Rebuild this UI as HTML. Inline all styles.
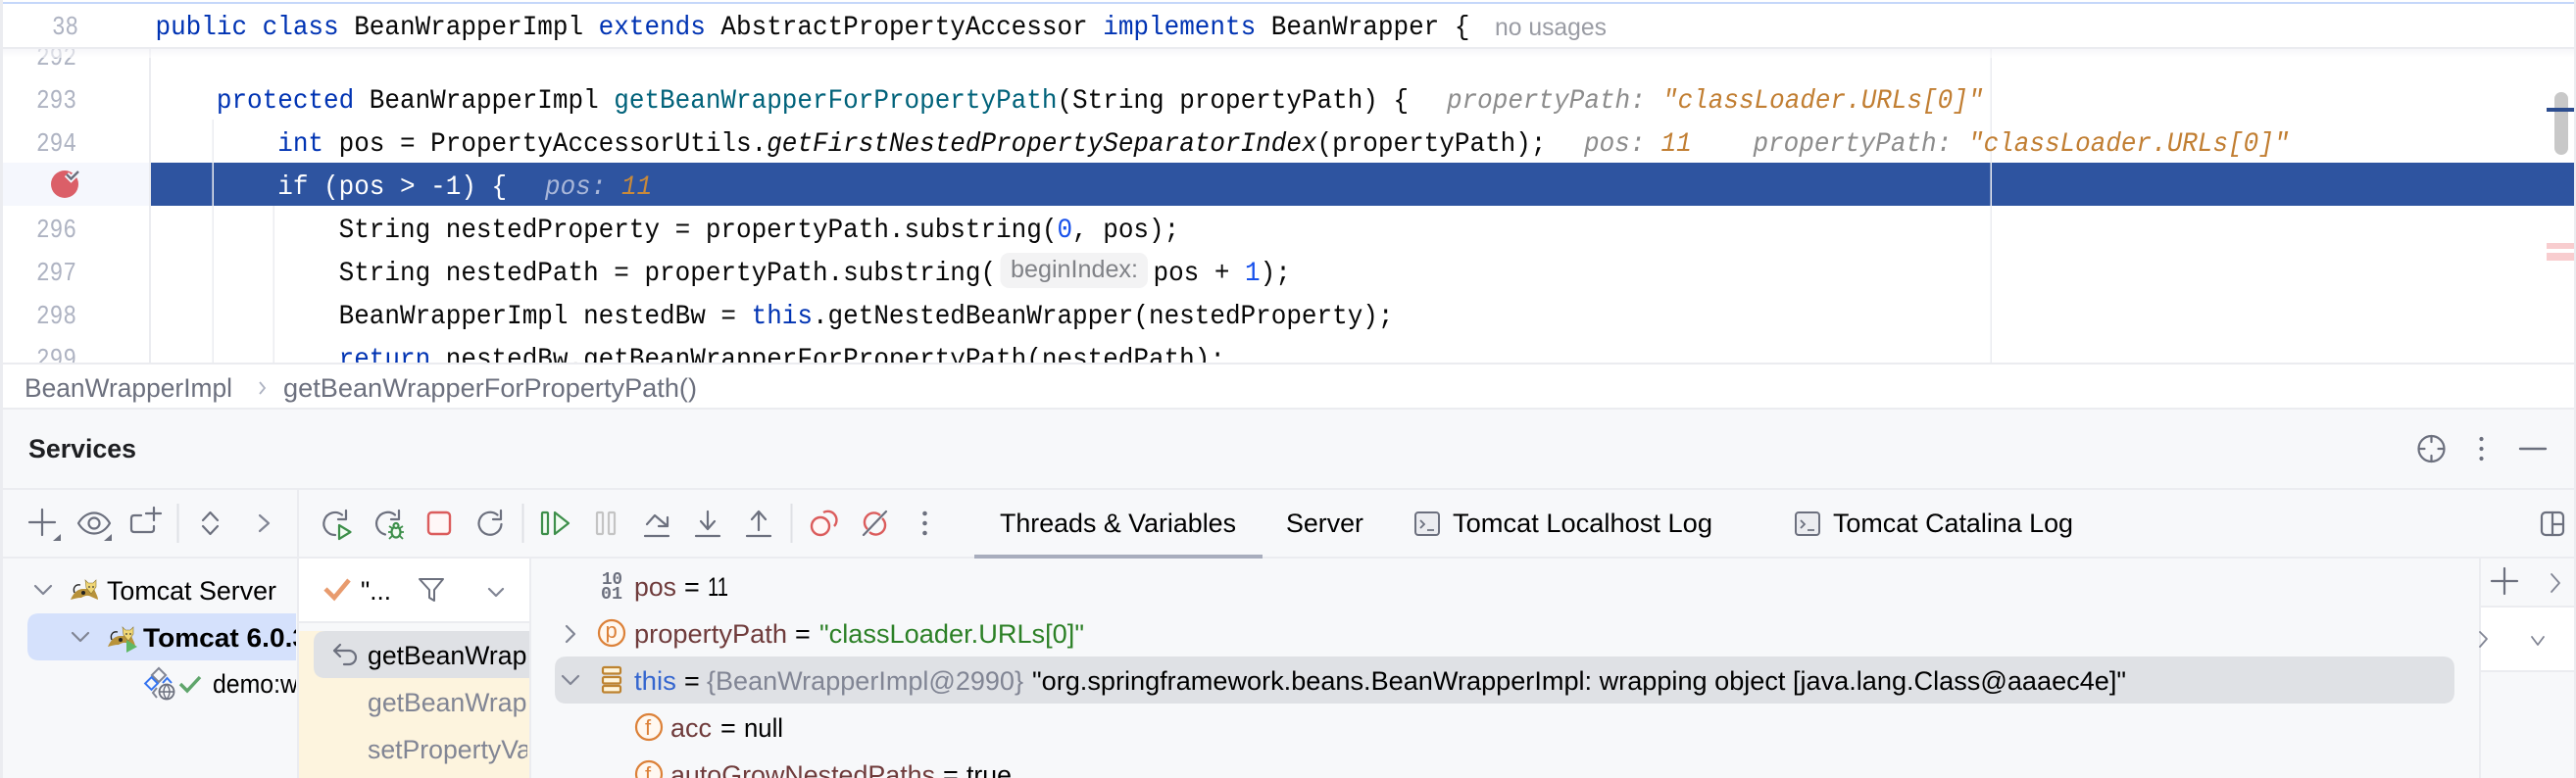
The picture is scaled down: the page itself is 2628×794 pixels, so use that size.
<!DOCTYPE html>
<html><head><meta charset="utf-8"><title>BeanWrapperImpl</title>
<style>
html,body{margin:0;padding:0;width:2628px;height:794px;overflow:hidden;background:#fff}
svg{display:block;position:absolute;left:0;top:0}
.c{font:28px "Liberation Mono",monospace;white-space:pre;fill:#080808}
.k{fill:#0033b3}.m{fill:#00627a}.n{fill:#1750eb}.i{font-style:italic}
.g{fill:#8c8c8c;font-style:italic}.o{fill:#c17e32;font-style:italic}
.ln{font:27px "Liberation Mono",monospace;fill:#aeb3c2}
.s{font:27px "Liberation Sans",sans-serif;fill:#000;white-space:pre}
.b{font-weight:bold}
.v{fill:#6f3b3b}.e{fill:#000}
.ic{fill:none;stroke:#6c707e;stroke-width:2.2;stroke-linecap:round;stroke-linejoin:round}
.gr{fill:#f2fcf3;stroke:#3d8f4a;stroke-width:2.2;stroke-linejoin:round}
.rd{fill:#fff7f7;stroke:#db5c5c;stroke-width:2.4}
.or{fill:#fff8f0;stroke:#dc8138;stroke-width:2.2}
</style></head><body>
<svg width="2628" height="794" viewBox="0 0 2628 794" xmlns="http://www.w3.org/2000/svg">
<defs>
<clipPath id="c1"><rect x="0" y="500" width="302" height="294"/></clipPath>
<clipPath id="c2"><rect x="305" y="636" width="233" height="158"/></clipPath>
<linearGradient id="sh" x1="0" y1="0" x2="0" y2="1"><stop offset="0" stop-color="#f1f1f6"/><stop offset="1" stop-color="#fff"/></linearGradient>
<g id="cat">
<path d="M0 20 C3 13 7 9 13 9 L24 9 C26 14 28 17 28 20 L21 17 C18 15 14 16 11 18 C7 18 4 19 0 20Z" fill="#b8923a"/>
<path d="M15 0 L18 3 L23 3 L26 0 L26 7 L21 14 L16 8Z" fill="#f0d675" stroke="#8a7430" stroke-width=".6"/>
<path d="M4 13 C2 8 5 4 10 5" fill="none" stroke="#222" stroke-width="1.4"/>
<circle cx="13" cy="13" r="2" fill="#222"/><circle cx="19" cy="7" r=".9" fill="#333"/><circle cx="23" cy="7" r=".9" fill="#333"/>
</g>
<path id="chevd" d="M0 0L8 8L16 0" fill="none" stroke="#818594" stroke-width="2.2" stroke-linecap="round" stroke-linejoin="round"/>
</defs>

<!-- editor -->
<rect width="2628" height="418" fill="#fff"/>
<rect x="0" y="2" width="2628" height="2" fill="#c5d7fa"/>

<!-- gutter & guides -->
<rect x="3" y="166" width="149" height="44" fill="#f5f7fd"/>
<rect x="152" y="50" width="2" height="320" fill="#ebecf0"/>
<rect x="154" y="166" width="2472" height="44" fill="#2e54a0"/>
<rect x="216.500" y="122" width="1.500" height="248" fill="#ebecf0"/>
<rect x="278.500" y="210" width="1.500" height="160" fill="#ebecf0"/>
<rect x="2030.500" y="50" width="1.500" height="320" fill="#ebecf0"/>

<!-- line numbers -->
<text class="ln" x="37" y="66" textLength="41" lengthAdjust="spacingAndGlyphs">292</text>
<text class="ln" x="37" y="110" textLength="41" lengthAdjust="spacingAndGlyphs">293</text>
<text class="ln" x="37" y="154" textLength="41" lengthAdjust="spacingAndGlyphs">294</text>
<text class="ln" x="37" y="242" textLength="41" lengthAdjust="spacingAndGlyphs">296</text>
<text class="ln" x="37" y="286" textLength="41" lengthAdjust="spacingAndGlyphs">297</text>
<text class="ln" x="37" y="330" textLength="41" lengthAdjust="spacingAndGlyphs">298</text>
<text class="ln" x="37" y="374" textLength="41" lengthAdjust="spacingAndGlyphs">299</text>

<!-- breakpoint -->
<circle cx="66" cy="188" r="14" fill="#db5f68"/>
<path d="M68 178L72.500 182.500L80 175" fill="none" stroke="#f5f7fd" stroke-width="6"/>
<path d="M68 178L72.500 182.500L80 175" fill="none" stroke="#6c707e" stroke-width="2.400"/>

<!-- code -->
<text class="c" transform="translate(158.500 110) scale(.9286 1)">    <tspan class="k">protected</tspan> BeanWrapperImpl <tspan class="m">getBeanWrapperForPropertyPath</tspan>(String propertyPath) {</text>
<text class="c g" transform="translate(1476 110) scale(.9286 1)">propertyPath:</text>
<text class="c o" transform="translate(1696 110) scale(.9286 1)">"classLoader.URLs[0]"</text>

<text class="c" transform="translate(158.500 154) scale(.9286 1)">        <tspan class="k">int</tspan> pos = PropertyAccessorUtils.<tspan class="i">getFirstNestedPropertySeparatorIndex</tspan>(propertyPath);</text>
<text class="c g" transform="translate(1616 154) scale(.9286 1)">pos:</text>
<text class="c o" transform="translate(1694.500 154) scale(.9286 1)">11</text>
<text class="c g" transform="translate(1788.500 154) scale(.9286 1)">propertyPath:</text>
<text class="c o" transform="translate(2008 154) scale(.9286 1)">"classLoader.URLs[0]"</text>

<text class="c" style="fill:#fff" transform="translate(158.500 198) scale(.9286 1)">        if (pos &gt; -1) {</text>
<text class="c g" style="fill:#a9b7d9" transform="translate(556 198) scale(.9286 1)">pos:</text>
<text class="c o" style="fill:#c8893a" transform="translate(634 198) scale(.9286 1)">11</text>

<text class="c" transform="translate(158.500 242) scale(.9286 1)">            String nestedProperty = propertyPath.substring(<tspan class="n">0</tspan>, pos);</text>
<text class="c" transform="translate(158.500 286) scale(.9286 1)">            String nestedPath = propertyPath.substring(</text>
<rect x="1020.500" y="258" width="150.500" height="36" rx="9" fill="#f3f3f4"/>
<text class="s" style="font-size:25px;fill:#808287" x="1031" y="283" textLength="130" lengthAdjust="spacingAndGlyphs">beginIndex:</text>
<text class="c" transform="translate(1176.500 286) scale(.9286 1)">pos + <tspan class="n">1</tspan>);</text>
<text class="c" transform="translate(158.500 330) scale(.9286 1)">            BeanWrapperImpl nestedBw = <tspan class="k">this</tspan>.getNestedBeanWrapper(nestedProperty);</text>
<text class="c" transform="translate(158.500 374) scale(.9286 1)">            <tspan class="k">return</tspan> nestedBw.getBeanWrapperForPropertyPath(nestedPath);</text>

<!-- sticky line -->
<rect x="3" y="4" width="2623" height="44" fill="#fff"/>
<rect x="3" y="48" width="2623" height="2" fill="#ebecf0"/>
<rect x="3" y="50" width="2623" height="9" fill="url(#sh)" opacity=".6"/>
<text class="ln" x="53" y="35" textLength="27" lengthAdjust="spacingAndGlyphs">38</text>
<text class="c" transform="translate(158.500 35) scale(.9286 1)"><tspan class="k">public class</tspan> BeanWrapperImpl <tspan class="k">extends</tspan> AbstractPropertyAccessor <tspan class="k">implements</tspan> BeanWrapper {</text>
<text class="s" style="font-size:25px;fill:#9a9ca4" x="1525" y="36" textLength="114" lengthAdjust="spacingAndGlyphs">no usages</text>

<!-- scrollbar marks -->
<rect x="2606" y="94" width="14" height="64" rx="7" fill="#c8c8c8"/>
<rect x="2598" y="110" width="28" height="4" fill="#2c4d8f"/>
<rect x="2598" y="248" width="28" height="6" fill="#f8cdcf"/>
<rect x="2598" y="258" width="28" height="8" fill="#f8cdcf"/>

<!-- breadcrumbs -->
<rect x="0" y="370" width="2628" height="48" fill="#fff"/>
<rect x="0" y="370" width="2628" height="2" fill="#ebecf0"/>
<text class="s" style="fill:#6c707e" x="25" y="405" textLength="212" lengthAdjust="spacingAndGlyphs">BeanWrapperImpl</text>
<path d="M265 390L270 396L265 402" fill="none" stroke="#aeb3c2" stroke-width="1.800"/>
<text class="s" style="fill:#6c707e" x="289" y="405" textLength="422" lengthAdjust="spacingAndGlyphs">getBeanWrapperForPropertyPath()</text>

<!-- services panel -->
<rect x="0" y="416" width="2628" height="378" fill="#f7f8fa"/>
<rect x="0" y="416" width="2628" height="2" fill="#ebecf0"/>
<rect x="0" y="498" width="2628" height="2" fill="#ebecf0"/>
<rect x="0" y="568" width="2628" height="2" fill="#ebecf0"/>
<rect x="303" y="500" width="2" height="294" fill="#ebecf0"/>
<text class="s b" style="fill:#1e1f22" x="29" y="467" textLength="110" lengthAdjust="spacingAndGlyphs">Services</text>

<!-- title actions -->
<circle cx="2480.500" cy="458" r="13" class="ic"/>
<path d="M2480.500 445V451M2480.500 465V471M2467.500 458H2473.500M2487.500 458H2493.500" class="ic"/>
<circle cx="2531.500" cy="448" r="2.100" fill="#6c707e"/><circle cx="2531.500" cy="458" r="2.100" fill="#6c707e"/><circle cx="2531.500" cy="468" r="2.100" fill="#6c707e"/>
<path d="M2571 458H2597" class="ic" style="stroke-width:2.400"/>

<!-- left toolbar -->
<path d="M30 533H56M43 520V546" class="ic"/>
<path d="M62 545V552H54Z" fill="#6c707e"/>
<path d="M80 534C88 520 104 520 112 534C104 548 88 548 80 534Z" class="ic"/><circle cx="96" cy="534" r="5.500" class="ic"/>
<path d="M114 545V552H106Z" fill="#6c707e"/>
<path d="M144 526H137Q134 526 134 529V540Q134 543 137 543H154Q157 543 157 540V537" class="ic"/>
<path d="M149 524H164M157 518V531" class="ic"/>
<rect x="180.500" y="514" width="2" height="40" fill="#dfe1e5"/>
<path d="M207 531L214.500 523L222 531M207 537L214.500 545L222 537" class="ic"/>
<path d="M265 526L274 534L265 542" class="ic" style="stroke:#818594"/>

<!-- debug toolbar -->
<path d="M349 525.500A11.500 11.500 0 1 0 342 546" class="ic"/><path d="M353 521V530H345" class="ic"/>
<path d="M346 536L357.500 543L346 550Z" class="gr"/>
<path d="M403 525.500A11.500 11.500 0 1 0 393 545.500" class="ic"/><path d="M407 521V530H399" class="ic"/>
<ellipse cx="404" cy="543" rx="4.500" ry="5.500" class="gr"/><circle cx="404" cy="536.500" r="2.500" class="gr"/><path d="M397 537L400 539M411 537L408 539M396 543H399.500M412 543H408.500M397 550L400 547M411 550L408 547" fill="none" stroke="#3d8f4a" stroke-width="1.800"/>
<rect x="437" y="523" width="22" height="22" rx="3.500" class="rd"/>
<path d="M511.500 535A11.500 11.500 0 1 1 507.500 525.500" class="ic"/><path d="M511 521V530H503" class="ic"/>
<rect x="532.500" y="514" width="2" height="40" fill="#dfe1e5"/>
<rect x="553" y="523" width="6" height="22" rx="1" class="gr"/>
<path d="M566 523L580 534L566 545Z" class="gr"/>
<rect x="609" y="523" width="6" height="22" rx="1" fill="#f7f8fa" stroke="#c4c4c4" stroke-width="2.200"/>
<rect x="621" y="523" width="6" height="22" rx="1" fill="#f7f8fa" stroke="#c4c4c4" stroke-width="2.200"/>
<path d="M660 535L668 526L681 537M681 528V537H672M658 547H682" class="ic"/>
<path d="M722 522V540M715 532L722 540L729 532M710 547H734" class="ic"/>
<path d="M774 522V541M767 530L774 522L781 530M762 547H786" class="ic"/>
<rect x="806.500" y="514" width="2" height="40" fill="#dfe1e5"/>
<path d="M840 523A9 9 0 0 1 851 537" class="rd" style="fill:none"/>
<circle cx="837" cy="537" r="9" class="rd"/>
<path d="M898 526A9.500 9.500 0 0 0 885 540M887 543A9.500 9.500 0 0 0 900 529" class="rd" style="fill:none"/>
<path d="M881 546L904 522" class="ic"/>
<circle cx="943.500" cy="524" r="2.300" fill="#6c707e"/><circle cx="943.500" cy="534" r="2.300" fill="#6c707e"/><circle cx="943.500" cy="544" r="2.300" fill="#6c707e"/>

<!-- tabs -->
<text class="s" x="1020" y="543" textLength="241" lengthAdjust="spacingAndGlyphs">Threads &amp; Variables</text>
<rect x="994" y="566" width="294" height="4" fill="#a8adbd"/>
<text class="s" x="1312" y="543" textLength="79" lengthAdjust="spacingAndGlyphs">Server</text>
<rect x="1444" y="523" width="24" height="23" rx="3" fill="#ebecf0" stroke="#6c707e" stroke-width="2"/>
<path d="M1449 531L1453 535L1449 539M1456 541H1463" fill="none" stroke="#6c707e" stroke-width="1.800"/>
<text class="s" x="1482" y="543" textLength="265" lengthAdjust="spacingAndGlyphs">Tomcat Localhost Log</text>
<rect x="1832" y="523" width="24" height="23" rx="3" fill="#ebecf0" stroke="#6c707e" stroke-width="2"/>
<path d="M1837 531L1841 535L1837 539M1844 541H1851" fill="none" stroke="#6c707e" stroke-width="1.800"/>
<text class="s" x="1870" y="543" textLength="245" lengthAdjust="spacingAndGlyphs">Tomcat Catalina Log</text>
<rect x="2593" y="523" width="22" height="23" rx="4" class="ic"/><path d="M2604 523V546M2604 535H2615" class="ic"/>

<!-- services tree -->
<use href="#chevd" x="36" y="598"/>
<use href="#cat" x="72" y="592"/>
<text class="s" x="109" y="612" textLength="173" lengthAdjust="spacingAndGlyphs">Tomcat Server</text>
<path d="M40 626H302V674H40Q28 674 28 662V638Q28 626 40 626Z" fill="#d5e1fc"/>
<use href="#chevd" x="74" y="646"/>
<use href="#cat" x="110" y="640"/>
<path d="M129 653L140 660L129 666Z" fill="#5fb865"/>
<g clip-path="url(#c1)"><text class="s b" x="146" y="660" textLength="168" lengthAdjust="spacingAndGlyphs">Tomcat 6.0.3</text>
<text class="s" transform="translate(217 707) scale(.92 1)">demo:war exploded</text></g>
<rect x="157" y="684" width="10" height="10" transform="rotate(45 162 689)" fill="none" stroke="#818594" stroke-width="2"/>
<rect x="150" y="693" width="9" height="9" transform="rotate(45 154.500 697.500)" fill="none" stroke="#3574f0" stroke-width="2"/>
<path d="M166 697L170.500 692L175 697" fill="none" stroke="#3574f0" stroke-width="2"/>
<path d="M160 702L156 707L160 712" fill="none" stroke="#818594" stroke-width="2"/>
<circle cx="170" cy="706" r="7.500" fill="#f7f8fa" stroke="#6c707e" stroke-width="1.800"/><path d="M162.500 706H177.500M170 698.500C166 703 166 709 170 713.500C174 709 174 703 170 698.500" fill="none" stroke="#6c707e" stroke-width="1.400"/>
<path d="M184 698L191 705L204 691" fill="none" stroke="#5fa56b" stroke-width="3.400"/>

<!-- frames column -->
<rect x="305" y="570" width="235" height="64" fill="#fff"/>
<rect x="305" y="634" width="235" height="2" fill="#ebecf0"/>
<rect x="305" y="644" width="235" height="150" fill="#fdf4de"/>
<rect x="540" y="570" width="2" height="224" fill="#ebecf0"/>
<path d="M332 601L341 610L356 592" fill="none" stroke="#e89b6e" stroke-width="4.600"/>
<text class="s" x="368" y="612" textLength="31" lengthAdjust="spacingAndGlyphs">"...</text>
<path d="M428 591H452L443 602V613L438 610V602Z" class="ic" style="stroke-width:2"/>
<path d="M499 601L506 608L513 601" class="ic" style="stroke:#818594"/>
<path d="M332 644H540V692H332Q320 692 320 680V656Q320 644 332 644Z" fill="#dfe1e5"/>
<path d="M347 658L341 664L347 670M341 664H356A7 7 0 0 1 356 678H351" class="ic"/>
<g clip-path="url(#c2)">
<text class="s" transform="translate(375 678) scale(.987 1)">getBeanWrapperForPropertyPath</text>
<text class="s" style="fill:#818594" transform="translate(375 726) scale(.987 1)">getBeanWrapperForPropertyPath</text>
<text class="s" style="fill:#818594" transform="translate(375 774) scale(.987 1)">setPropertyValue</text>
</g>

<!-- variables -->
<path d="M578 670H2492Q2504 670 2504 682V706Q2504 718 2492 718H578Q566 718 566 706V682Q566 670 578 670Z" fill="#dfe1e5"/>
<text style="font:bold 18px 'Liberation Mono',monospace;fill:#6c707e" x="614" y="596" textLength="21" lengthAdjust="spacingAndGlyphs">10</text>
<text style="font:bold 18px 'Liberation Mono',monospace;fill:#6c707e" x="613" y="611" textLength="22" lengthAdjust="spacingAndGlyphs">01</text>
<text class="s v" x="647" y="608" textLength="43" lengthAdjust="spacingAndGlyphs">pos</text>
<text class="s e" x="698" y="608">=</text>
<text class="s e" x="722" y="608" textLength="21" lengthAdjust="spacingAndGlyphs">11</text>

<path d="M578 639L586 647L578 655" class="ic" style="stroke:#818594"/>
<circle cx="624" cy="646" r="13" class="or"/>
<text style="font:22px 'Liberation Sans',sans-serif;fill:#dc8138" x="617.500" y="651">p</text>
<text class="s v" x="647" y="656" textLength="156" lengthAdjust="spacingAndGlyphs">propertyPath</text>
<text class="s e" x="811" y="656">=</text>
<text class="s" style="fill:#2c8026" x="836" y="656" textLength="270" lengthAdjust="spacingAndGlyphs">"classLoader.URLs[0]"</text>

<use href="#chevd" x="574" y="690"/>
<rect x="615" y="681" width="18" height="6.500" rx="1.500" fill="#fff5dc" stroke="#bd8330" stroke-width="2.200"/>
<rect x="615" y="691" width="18" height="6.500" rx="1.500" fill="#fff5dc" stroke="#bd8330" stroke-width="2.200"/>
<rect x="615" y="700" width="18" height="6.500" rx="1.500" fill="#fff5dc" stroke="#bd8330" stroke-width="2.200"/>
<text class="s" style="fill:#3566cf" x="647" y="704" textLength="43" lengthAdjust="spacingAndGlyphs">this</text>
<text class="s e" x="698" y="704">=</text>
<text class="s" style="fill:#818594" x="721" y="704" textLength="323" lengthAdjust="spacingAndGlyphs">{BeanWrapperImpl@2990}</text>
<text class="s" x="1053" y="704" textLength="1116" lengthAdjust="spacingAndGlyphs">"org.springframework.beans.BeanWrapperImpl: wrapping object [java.lang.Class@aaaec4e]"</text>

<circle cx="662" cy="742" r="13" class="or"/>
<text style="font:22px 'Liberation Sans',sans-serif;fill:#dc8138" x="658" y="750">f</text>
<text class="s v" x="684" y="752" textLength="42" lengthAdjust="spacingAndGlyphs">acc</text>
<text class="s e" x="735" y="752">=</text>
<text class="s e" x="759" y="752" textLength="40" lengthAdjust="spacingAndGlyphs">null</text>

<circle cx="662" cy="790" r="13" class="or"/>
<text style="font:22px 'Liberation Sans',sans-serif;fill:#dc8138" x="658" y="798">f</text>
<text class="s v" x="684" y="800" textLength="270" lengthAdjust="spacingAndGlyphs">autoGrowNestedPaths</text>
<text class="s e" x="962" y="800">=</text>
<text class="s e" x="986" y="800" textLength="46" lengthAdjust="spacingAndGlyphs">true</text>

<!-- right strip -->
<rect x="2529" y="570" width="2" height="224" fill="#ebecf0"/>
<rect x="2531" y="620" width="97" height="64" fill="#fff"/>
<rect x="2531" y="618" width="97" height="2" fill="#ebecf0"/>
<rect x="2531" y="684" width="97" height="2" fill="#ebecf0"/>
<path d="M2542 593H2568M2555 580V606" class="ic"/>
<path d="M2603 586L2611 595L2603 604" class="ic" style="stroke:#818594;stroke-width:1.800"/>
<path d="M2530 645L2537 652L2530 660" class="ic" style="stroke:#818594;stroke-width:1.800"/>
<path d="M2583 650L2589 658L2595 650" class="ic" style="stroke:#818594;stroke-width:1.800"/>

<!-- window edges -->
<rect x="0" y="0" width="3" height="794" fill="#ebecf0"/>
<rect x="2626" y="0" width="2" height="794" fill="#ebecf0"/>
</svg>
</body></html>
